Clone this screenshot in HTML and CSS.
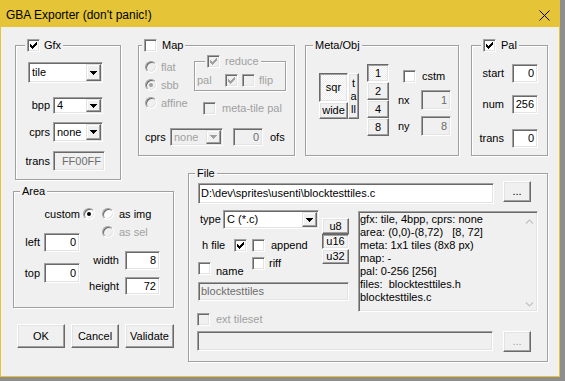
FILE: index.html
```html
<!DOCTYPE html>
<html lang="en">
<head>
    <meta charset="UTF-8">
    <title>GBA Exporter (don't panic!)</title>
    <link rel="stylesheet" href="styles.css">
</head>
<body>
    <div class="window">
        <div class="titlebar">
            <span class="title">GBA Exporter (don't panic!)</span>
            <svg class="close" width="11" height="11" viewBox="0 0 11 11"><path d="M0.5 0.5L10.5 10.5M10.5 0.5L0.5 10.5" stroke="#000" stroke-width="1"/></svg>
        </div>

        <div class="client">
            <div class="row-top">

                <!-- Gfx -->
                <div class="group gfx">
                    <div class="legend">
                        <span class="chk"><svg width="7" height="7" viewBox="0 0 7 7"><path d="M6 0h1v1H6zM5 1h2v1H5zM0 2h1v1H0zM4 2h3v1H4zM0 3h2v1H0zM3 3h3v1H3zM0 4h5v1H0zM1 5h3v1H1zM2 6h1v1H2z"/></svg></span>
                        <span class="lg-text">Gfx</span>
                    </div>
                    <div class="combo tile-combo">
                        <span class="combo-val">tile</span>
                        <span class="combo-btn"><svg width="7" height="4" viewBox="0 0 7 4"><path d="M0 0h7v1H0zM1 1h5v1H1zM2 2h3v1H2zM3 3h1v1H3z"/></svg></span>
                    </div>
                    <div class="frow bpp-row">
                        <span class="flabel">bpp</span>
                        <div class="combo gfx-combo short">
                            <span class="combo-val">4</span>
                            <span class="combo-btn"><svg width="7" height="4" viewBox="0 0 7 4"><path d="M0 0h7v1H0zM1 1h5v1H1zM2 2h3v1H2zM3 3h1v1H3z"/></svg></span>
                        </div>
                    </div>
                    <div class="frow cprs-row">
                        <span class="flabel">cprs</span>
                        <div class="combo gfx-combo">
                            <span class="combo-val">none</span>
                            <span class="combo-btn"><svg width="7" height="4" viewBox="0 0 7 4"><path d="M0 0h7v1H0zM1 1h5v1H1zM2 2h3v1H2zM3 3h1v1H3z"/></svg></span>
                        </div>
                    </div>
                    <div class="frow trans-row">
                        <span class="flabel">trans</span>
                        <div class="edit dis trans-edit">FF00FF</div>
                    </div>
                </div>

                <!-- Map -->
                <div class="group map">
                    <div class="legend">
                        <span class="chk"></span>
                        <span class="lg-text">Map</span>
                    </div>
                    <div class="map-main">
                        <div class="radios">
                            <div class="rrow"><span class="radio dis"></span><span class="rtext gray">flat</span></div>
                            <div class="rrow"><span class="radio dis"><span class="dot"></span></span><span class="rtext gray">sbb</span></div>
                            <div class="rrow"><span class="radio dis"></span><span class="rtext gray">affine</span></div>
                        </div>
                        <div class="map-right">
                            <div class="group reduce">
                                <div class="legend">
                                    <span class="chk dis"><svg width="7" height="7" viewBox="0 0 7 7"><path d="M6 0h1v1H6zM5 1h2v1H5zM0 2h1v1H0zM4 2h3v1H4zM0 3h2v1H0zM3 3h3v1H3zM0 4h5v1H0zM1 5h3v1H1zM2 6h1v1H2z"/></svg></span>
                                    <span class="lg-text gray">reduce</span>
                                </div>
                                <div class="reduce-row">
                                    <span class="pal-label gray">pal</span>
                                    <span class="chk dis"><svg width="7" height="7" viewBox="0 0 7 7"><path d="M6 0h1v1H6zM5 1h2v1H5zM0 2h1v1H0zM4 2h3v1H4zM0 3h2v1H0zM3 3h3v1H3zM0 4h5v1H0zM1 5h3v1H1zM2 6h1v1H2z"/></svg></span>
                                    <span class="chk dis flip-chk"></span>
                                    <span class="flip-text gray">flip</span>
                                </div>
                            </div>
                            <div class="mtp-row">
                                <span class="chk dis"></span>
                                <span class="mtp-text gray">meta-tile pal</span>
                            </div>
                        </div>
                    </div>
                    <div class="map-cprs">
                        <span class="mc-label">cprs</span>
                        <div class="combo dis map-combo">
                            <span class="combo-val">none</span>
                            <span class="combo-btn"><svg width="7" height="4" viewBox="0 0 7 4"><path d="M0 0h7v1H0zM1 1h5v1H1zM2 2h3v1H2zM3 3h1v1H3z"/></svg></span>
                        </div>
                        <div class="edit dis ofs-edit">0</div>
                        <span class="ofs-text">ofs</span>
                    </div>
                </div>

                <!-- Meta/Obj -->
                <div class="group meta">
                    <div class="legend"><span>Meta/Obj</span></div>
                    <div class="meta-main">
                        <div class="shape">
                            <div class="shape-col">
                                <div class="btn down sqr">sqr</div>
                                <div class="btn wide">wide</div>
                            </div>
                            <div class="btn tall">t<br>a<br>ll</div>
                        </div>
                        <div class="nums">
                            <div class="btn down">1</div>
                            <div class="btn">2</div>
                            <div class="btn">4</div>
                            <div class="btn">8</div>
                        </div>
                        <div class="meta-right">
                            <div class="cstm-row"><span class="chk"></span><span class="cstm-text">cstm</span></div>
                            <div class="nrow nx-row"><span class="nlabel">nx</span><div class="edit dis n-edit">1</div></div>
                            <div class="nrow ny-row"><span class="nlabel">ny</span><div class="edit dis n-edit">8</div></div>
                        </div>
                    </div>
                </div>

                <!-- Pal -->
                <div class="group pal">
                    <div class="legend">
                        <span class="chk"><svg width="7" height="7" viewBox="0 0 7 7"><path d="M6 0h1v1H6zM5 1h2v1H5zM0 2h1v1H0zM4 2h3v1H4zM0 3h2v1H0zM3 3h3v1H3zM0 4h5v1H0zM1 5h3v1H1zM2 6h1v1H2z"/></svg></span>
                        <span class="lg-text">Pal</span>
                    </div>
                    <div class="prow start-row"><span class="plabel">start</span><div class="edit p-edit">0</div></div>
                    <div class="prow num-row"><span class="plabel">num</span><div class="edit p-edit">256</div></div>
                    <div class="prow ptrans-row"><span class="plabel">trans</span><div class="edit p-edit">0</div></div>
                </div>
            </div>

            <div class="row-bottom">
                <div class="left-col">
                    <!-- Area -->
                    <div class="group area">
                        <div class="legend"><span>Area</span></div>
                        <div class="area-a">
                            <span class="custom-label">custom</span>
                            <span class="radio custom-radio"><span class="dot"></span></span>
                            <span class="radio img-radio"></span>
                            <span class="rtext">as img</span>
                        </div>
                        <div class="area-b">
                            <div class="area-lc">
                                <div class="arow left-row"><span class="alabel">left</span><div class="edit a-edit">0</div></div>
                                <div class="arow top-row"><span class="alabel">top</span><div class="edit a-edit">0</div></div>
                            </div>
                            <div class="area-rc">
                                <div class="assel-row"><span class="radio dis"></span><span class="rtext gray">as sel</span></div>
                                <div class="arow2 w-row"><span class="alabel2">width</span><div class="edit a-edit2">8</div></div>
                                <div class="arow2 h-row"><span class="alabel2">height</span><div class="edit a-edit2">72</div></div>
                            </div>
                        </div>
                    </div>
                    <div class="buttons">
                        <div class="btn btn-ok">OK</div>
                        <div class="btn btn-cancel">Cancel</div>
                        <div class="btn btn-validate">Validate</div>
                    </div>
                </div>

                <!-- File -->
                <div class="group file">
                    <div class="legend"><span>File</span></div>
                    <div class="path-row">
                        <div class="edit left path-edit">D:\dev\sprites\usenti\blocktesttiles.c</div>
                        <div class="btn dots-btn">...</div>
                    </div>
                    <div class="mid">
                        <div class="fleft">
                            <div class="fupper">
                                <div class="col-a">
                                    <div class="type-row">
                                        <span class="type-label">type</span>
                                        <div class="combo type-combo">
                                            <span class="combo-val">C (*.c)</span>
                                            <span class="combo-btn"><svg width="7" height="4" viewBox="0 0 7 4"><path d="M0 0h7v1H0zM1 1h5v1H1zM2 2h3v1H2zM3 3h1v1H3z"/></svg></span>
                                        </div>
                                    </div>
                                    <div class="hfile-row">
                                        <span class="hfile-label">h file</span>
                                        <span class="chk"><svg width="7" height="7" viewBox="0 0 7 7"><path d="M6 0h1v1H6zM5 1h2v1H5zM0 2h1v1H0zM4 2h3v1H4zM0 3h2v1H0zM3 3h3v1H3zM0 4h5v1H0zM1 5h3v1H1zM2 6h1v1H2z"/></svg></span>
                                        <span class="chk append-chk"></span>
                                        <span class="append-text">append</span>
                                    </div>
                                    <div class="nr-row">
                                        <div class="name-part"><span class="chk"></span><span class="name-text">name</span></div>
                                        <div class="riff-part"><span class="chk"></span><span class="riff-text">riff</span></div>
                                    </div>
                                </div>
                                <div class="col-b">
                                    <div class="btn u8">u8</div>
                                    <div class="btn down u16">u16</div>
                                    <div class="btn u32">u32</div>
                                </div>
                            </div>
                            <div class="edit left dis name-edit">blocktesttiles</div>
                        </div>
                        <div class="info">
                            <div class="info-text">gfx: tile, 4bpp, cprs: none
area: (0,0)-(8,72)   [8, 72]
meta: 1x1 tiles (8x8 px)
map: -
pal: 0-256 [256]
files:  blocktesttiles.h
blocktesttiles.c</div>
                            <div class="scroll">
                                <svg class="sc-up" width="9" height="5" viewBox="0 0 9 5"><polyline points="1,4.5 4.5,1 8,4.5" fill="none" stroke="#c2c2c2" stroke-width="1.2"/></svg>
                                <svg class="sc-down" width="9" height="5" viewBox="0 0 9 5"><polyline points="1,0.5 4.5,4 8,0.5" fill="none" stroke="#c2c2c2" stroke-width="1.2"/></svg>
                            </div>
                        </div>
                    </div>
                    <div class="ext-row">
                        <span class="chk dis"></span>
                        <span class="ext-text gray">ext tileset</span>
                    </div>
                    <div class="bottom-row">
                        <div class="edit left dis ext-edit"></div>
                        <div class="btn dots-btn2 gray">...</div>
                    </div>
                </div>
            </div>
        </div>
    </div>
</body>
</html>
```

FILE: styles.css
```css
* {
    box-sizing: border-box;
}
body {
    margin: 0;
    background: #8e8e8e;
    font: 11px/13px "Liberation Sans", Arial, sans-serif;
    color: #000;
    overflow: hidden;
}
.window {
    width: 560px;
    height: 377px;
    border: 1px solid #e5c437;
    background: #f0f0f0;
}
.titlebar {
    height: 26px;
    background: #e5c437;
    display: flex;
    justify-content: space-between;
    align-items: flex-start;
    padding-left: 5px;
}
.title {
    font: 12px/16px "Liberation Sans", Arial, sans-serif;
    margin-top: 6px;
}
.close {
    margin: 9px 9px 0 0;
}
.gray {
    color: #a0a0a0;
}

/* common controls */
.group {
    border: 1px solid #a0a0a0;
    box-shadow: 1px 1px 0 #fff, inset 1px 1px 0 #fff;
}
.legend {
    display: flex;
    align-items: center;
    width: max-content;
    height: 14px;
    margin-top: -8px;
    padding: 0 2px;
    background: #f0f0f0;
}
.lg-text {
    margin-left: 5px;
}
.chk {
    width: 13px;
    height: 13px;
    flex: none;
    border: 1px solid;
    border-color: #a0a0a0 #fff #fff #a0a0a0;
    box-shadow: inset 1px 1px #696969, inset -1px -1px #e3e3e3;
    background: #fff;
    display: flex;
    align-items: center;
    justify-content: center;
}
.chk svg {
    fill: #000;
}
.chk.dis {
    background: #f0f0f0;
}
.chk.dis svg {
    fill: #a0a0a0;
}
.radio {
    width: 12px;
    height: 12px;
    flex: none;
    border-radius: 50%;
    border: 1px solid;
    border-color: #a0a0a0 #fff #fff #a0a0a0;
    box-shadow: inset 1px 1px #696969, inset -1px -1px #e3e3e3;
    background: #fff;
    display: flex;
    align-items: center;
    justify-content: center;
}
.radio .dot {
    width: 4px;
    height: 4px;
    border-radius: 50%;
    background: #000;
}
.radio.dis {
    background: #f0f0f0;
}
.radio.dis .dot {
    background: #a0a0a0;
}
.edit {
    flex: none;
    border: 1px solid;
    border-color: #a0a0a0 #fff #fff #a0a0a0;
    box-shadow: inset 1px 1px #696969, inset -1px -1px #e3e3e3;
    background: #fff;
    padding: 0 3px;
    display: flex;
    align-items: center;
    justify-content: flex-end;
    white-space: nowrap;
    overflow: hidden;
}
.edit.left {
    justify-content: flex-start;
    padding-left: 2px;
}
.edit.dis {
    background: #f0f0f0;
    color: #6d6d6d;
}
.combo {
    flex: none;
    display: flex;
    padding: 1px;
    border: 1px solid;
    border-color: #a0a0a0 #fff #fff #a0a0a0;
    box-shadow: inset 1px 1px #696969, inset -1px -1px #e3e3e3;
    background: #fff;
}
.combo-val {
    flex: 1;
    display: flex;
    align-items: center;
    padding-left: 2px;
}
.combo-btn {
    width: 15px;
    border: 1px solid;
    border-color: #e3e3e3 #696969 #696969 #e3e3e3;
    box-shadow: inset -1px -1px #a0a0a0, inset 1px 1px #fff;
    background: #f0f0f0;
    display: flex;
    align-items: center;
    justify-content: center;
}
.combo.dis {
    background: #f0f0f0;
    color: #a0a0a0;
}
.combo.dis svg {
    fill: #a0a0a0;
}
.btn {
    flex: none;
    border: 1px solid;
    border-color: #fff #696969 #696969 #fff;
    box-shadow: inset -1px -1px #a0a0a0, inset 1px 1px #e3e3e3;
    background: #f0f0f0;
    display: flex;
    align-items: center;
    justify-content: center;
    text-align: center;
}
.btn.down {
    border-color: #696969 #fff #fff #696969;
    box-shadow: inset 1px 1px #a0a0a0, inset -1px -1px #e3e3e3;
    background: repeating-conic-gradient(#fff 0 25%, #ececec 0 50%) 0 0 / 2px 2px;
}

/* layout */
.row-top {
    display: flex;
    align-items: flex-start;
    padding-top: 18px;
}
.row-bottom {
    display: flex;
    align-items: flex-start;
}

/* Gfx */
.gfx {
    width: 106px;
    height: 135px;
    margin-left: 14px;
}
.gfx .legend {
    margin-left: 9px;
}
.gfx .lg-text {
    margin-left: 4px;
}
.tile-combo {
    width: 75px;
    height: 21px;
    margin: 10px 0 0 12px;
}
.frow {
    display: flex;
    align-items: center;
}
.flabel {
    width: 33px;
    margin: 0 3px 0 1px;
    text-align: right;
}
.gfx-combo {
    width: 50px;
    height: 20px;
}
.gfx-combo.short {
    height: 17px;
}
.bpp-row {
    margin-top: 14px;
}
.cprs-row {
    margin-top: 8px;
}
.trans-row {
    margin-top: 9px;
}
.trans-edit {
    width: 52px;
    height: 20px;
}

/* Map */
.map {
    width: 157px;
    height: 111px;
    margin-left: 17px;
}
.map .legend {
    margin-left: 3px;
}
.map-main {
    display: flex;
    align-items: flex-start;
}
.radios {
    width: 49px;
    flex: none;
    margin: 6px 0 0 6px;
}
.rrow {
    display: flex;
    align-items: center;
    height: 18px;
}
.rtext {
    margin-left: 4px;
}
.map-right {
    margin-top: 9px;
}
.reduce {
    width: 92px;
    height: 30px;
}
.reduce .legend {
    margin-left: 10px;
}
.reduce-row {
    display: flex;
    align-items: center;
    height: 14px;
    margin: 5px 0 0 2px;
}
.pal-label {
    width: 28px;
}
.flip-chk {
    margin-left: 4px;
}
.flip-text {
    margin-left: 4px;
}
.mtp-row {
    display: flex;
    align-items: center;
    height: 14px;
    margin: 10px 0 0 9px;
}
.mtp-text {
    margin-left: 6px;
}
.map-cprs {
    display: flex;
    align-items: center;
    margin: 13px 0 0 6px;
}
.mc-label {
    width: 25px;
}
.map-combo {
    width: 53px;
    height: 18px;
}
.ofs-edit {
    width: 30px;
    height: 18px;
    margin-left: 10px;
}
.ofs-text {
    margin-left: 7px;
}

/* Meta/Obj */
.meta {
    width: 154px;
    height: 111px;
    margin-left: 10px;
}
.meta .legend {
    margin-left: 7px;
}
.meta-main {
    display: flex;
    align-items: flex-start;
}
.shape {
    display: flex;
    margin: 21px 0 0 13px;
}
.shape-col {
    display: flex;
    flex-direction: column;
}
.sqr {
    width: 29px;
    height: 29px;
}
.wide {
    width: 29px;
    height: 17px;
}
.tall {
    width: 11px;
    height: 46px;
}
.nums {
    display: flex;
    flex-direction: column;
    margin: 12px 0 0 8px;
}
.nums .btn {
    width: 22px;
    height: 18px;
}
.meta-right {
    margin: 17px 0 0 9px;
}
.cstm-row {
    display: flex;
    align-items: center;
    height: 14px;
    padding-left: 5px;
}
.cstm-text {
    margin-left: 6px;
}
.nrow {
    display: flex;
    align-items: center;
}
.nlabel {
    width: 23px;
}
.n-edit {
    width: 30px;
    height: 20px;
}
.nx-row {
    margin-top: 7px;
}
.ny-row {
    margin-top: 6px;
}

/* Pal */
.pal {
    width: 77px;
    height: 111px;
    margin-left: 12px;
}
.pal .legend {
    margin-left: 9px;
}
.prow {
    display: flex;
    align-items: center;
}
.plabel {
    width: 32px;
    margin-right: 8px;
    text-align: right;
}
.p-edit {
    width: 26px;
    height: 19px;
}
.start-row,
.num-row {
    margin-top: 12px;
}
.ptrans-row {
    margin-top: 15px;
}

/* Area */
.left-col {
    width: 161px;
    margin: 11px 0 0 12px;
}
.area {
    height: 117px;
}
.area .legend {
    margin-left: 6px;
}
.area-a {
    display: flex;
    align-items: center;
    height: 14px;
    margin-top: 9px;
}
.custom-label {
    width: 66px;
    text-align: right;
}
.custom-radio {
    margin-left: 3px;
}
.img-radio {
    margin-left: 7px;
}
.area-a .rtext,
.assel-row .rtext {
    margin-left: 5px;
}
.area-b {
    display: flex;
    align-items: flex-start;
}
.area-lc {
    margin-top: 12px;
}
.arow {
    display: flex;
    align-items: center;
}
.alabel {
    width: 26px;
    text-align: right;
}
.a-edit {
    width: 36px;
    height: 19px;
    margin-left: 4px;
}
.top-row {
    margin-top: 11px;
}
.top-row .a-edit {
    height: 20px;
}
.assel-row {
    display: flex;
    align-items: center;
    height: 14px;
    margin-top: 4px;
    padding-left: 22px;
}
.arow2 {
    display: flex;
    align-items: center;
}
.alabel2 {
    width: 39px;
    text-align: right;
}
.a-edit2 {
    width: 35px;
    height: 19px;
    margin-left: 6px;
}
.w-row {
    margin-top: 12px;
}
.h-row {
    margin-top: 7px;
}
.h-row .a-edit2 {
    height: 18px;
}
.buttons {
    display: flex;
    gap: 6px;
    margin: 16px 0 0 4px;
}
.buttons .btn {
    width: 48px;
    height: 24px;
}
.buttons .btn-validate {
    width: 49px;
}

/* File */
.file {
    width: 360px;
    height: 189px;
    margin: -7px 0 0 14px;
}
.file .legend {
    margin-left: 6px;
}
.path-row {
    display: flex;
    align-items: flex-start;
}
.path-edit {
    width: 296px;
    height: 21px;
    margin: 3px 0 0 9px;
}
.dots-btn {
    width: 28px;
    height: 21px;
    margin: 1px 0 0 9px;
}
.mid {
    display: flex;
    align-items: flex-start;
}
.fleft {
    width: 151px;
    margin: 6px 0 0 9px;
}
.fupper {
    display: flex;
    align-items: flex-start;
}
.col-a {
    width: 121px;
    flex: none;
}
.type-row {
    display: flex;
    align-items: center;
}
.type-label {
    width: 25px;
    padding-left: 2px;
}
.type-combo {
    width: 96px;
    height: 19px;
}
.hfile-row {
    display: flex;
    align-items: center;
    height: 13px;
    margin-top: 10px;
}
.hfile-label {
    width: 36px;
    padding-left: 4px;
}
.append-chk {
    margin-left: 5px;
}
.append-text {
    margin-left: 6px;
}
.nr-row {
    display: flex;
    align-items: flex-start;
    margin-top: 5px;
}
.name-part {
    display: flex;
    align-items: flex-start;
    width: 54px;
    margin-top: 5px;
}
.name-text {
    margin-left: 5px;
    padding-top: 3px;
}
.riff-part {
    display: flex;
    align-items: flex-start;
}
.riff-text {
    margin-left: 4px;
}
.col-b {
    display: flex;
    flex-direction: column;
    margin: 8px 0 0 3px;
}
.col-b .btn {
    width: 27px;
    height: 15px;
}
.col-b .u8 {
    height: 16px;
}
.name-edit {
    width: 151px;
    height: 19px;
    margin-top: 4px;
}
.info {
    width: 180px;
    height: 101px;
    margin: 7px 0 0 9px;
    display: flex;
    border: 1px solid;
    border-color: #a0a0a0 #fff #fff #a0a0a0;
    box-shadow: inset 1px 1px #696969, inset -1px -1px #e3e3e3;
    background: #f0f0f0;
}
.info-text {
    flex: 1;
    padding: 1px 0 0 1px;
    white-space: pre;
    overflow: hidden;
}
.scroll {
    width: 16px;
    display: flex;
    flex-direction: column;
    justify-content: space-between;
    align-items: center;
    padding: 7px 0 4px;
}
.ext-row {
    display: flex;
    align-items: center;
    height: 13px;
    margin: 1px 0 0 8px;
}
.ext-text {
    margin-left: 6px;
}
.bottom-row {
    display: flex;
    align-items: flex-start;
    margin: 5px 0 0 8px;
}
.ext-edit {
    width: 296px;
    height: 20px;
}
.dots-btn2 {
    width: 28px;
    height: 21px;
    margin-left: 10px;
}
```
